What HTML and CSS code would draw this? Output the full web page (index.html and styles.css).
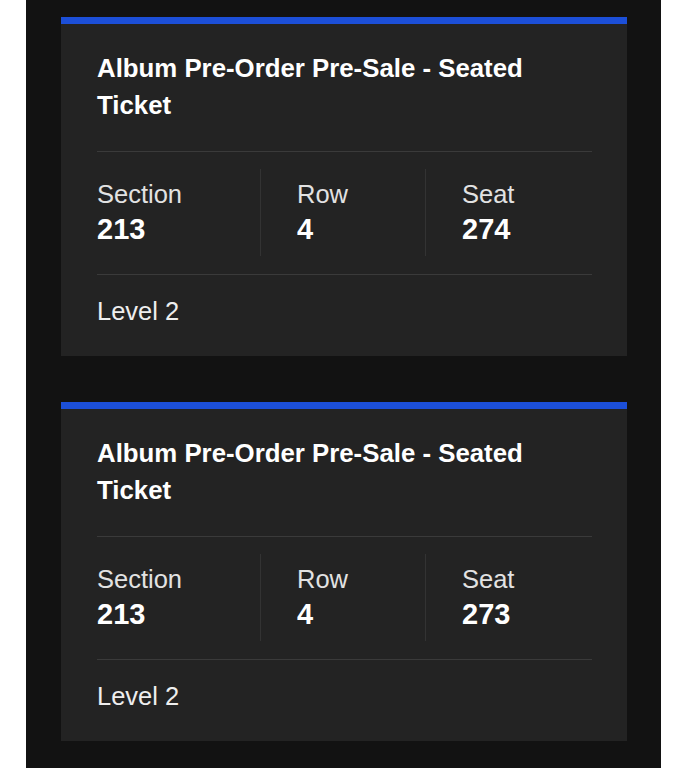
FILE: index.html
```html
<!DOCTYPE html>
<html lang="en">
<head>
<meta charset="utf-8">
<title>Tickets</title>
<link rel="stylesheet" href="styles.css">
</head>
<body>
<div class="panel">
  <div class="card">
    <h2 class="title">Album Pre-Order Pre-Sale - Seated Ticket</h2>
    <div class="grid">
      <div class="col"><div class="label">Section</div><div class="value">213</div></div>
      <div class="col"><div class="label">Row</div><div class="value">4</div></div>
      <div class="col"><div class="label">Seat</div><div class="value">274</div></div>
    </div>
    <div class="level">Level 2</div>
  </div>
  <div class="card">
    <h2 class="title">Album Pre-Order Pre-Sale - Seated Ticket</h2>
    <div class="grid">
      <div class="col"><div class="label">Section</div><div class="value">213</div></div>
      <div class="col"><div class="label">Row</div><div class="value">4</div></div>
      <div class="col"><div class="label">Seat</div><div class="value">273</div></div>
    </div>
    <div class="level">Level 2</div>
  </div>
</div>
</body>
</html>
```

FILE: styles.css
```css
html, body {
  margin: 0;
  padding: 0;
  background: #ffffff;
}
body {
  font-family: "Liberation Sans", Arial, Helvetica, sans-serif;
  height: 768px;
  overflow: hidden;
}
.panel {
  margin-left: 26px;
  width: 635px;
  min-height: 768px;
  background: #121212;
  padding: 17px 34px 0 35px;
  box-sizing: border-box;
  display: flex;
  flex-direction: column;
  gap: 46px;
}
.card {
  background: #232323;
  border-top: 7px solid #1c4fd8;
  padding: 26px 35px 30px 36px;
}
.title {
  margin: 0 0 27px 0;
  font-size: 25.8px;
  line-height: 37px;
  font-weight: 700;
  color: #ffffff;
}
.grid {
  display: grid;
  grid-template-columns: 163px 165px 1fr;
  border-top: 1px solid #3a3a3a;
  border-bottom: 1px solid #3a3a3a;
  padding: 17px 0 18px 0;
}
.col {
  padding: 10px 0 10px 36px;
  border-left: 1px solid #333333;
}
.col:first-child {
  padding-left: 0;
  border-left: none;
}
.label {
  font-size: 25.5px;
  line-height: 30px;
  color: #e2e2e2;
}
.value {
  margin-top: 3px;
  font-size: 29px;
  line-height: 34px;
  font-weight: 700;
  color: #ffffff;
}
.level {
  padding-top: 21px;
  font-size: 25.5px;
  line-height: 30px;
  color: #eeeeee;
}
```
